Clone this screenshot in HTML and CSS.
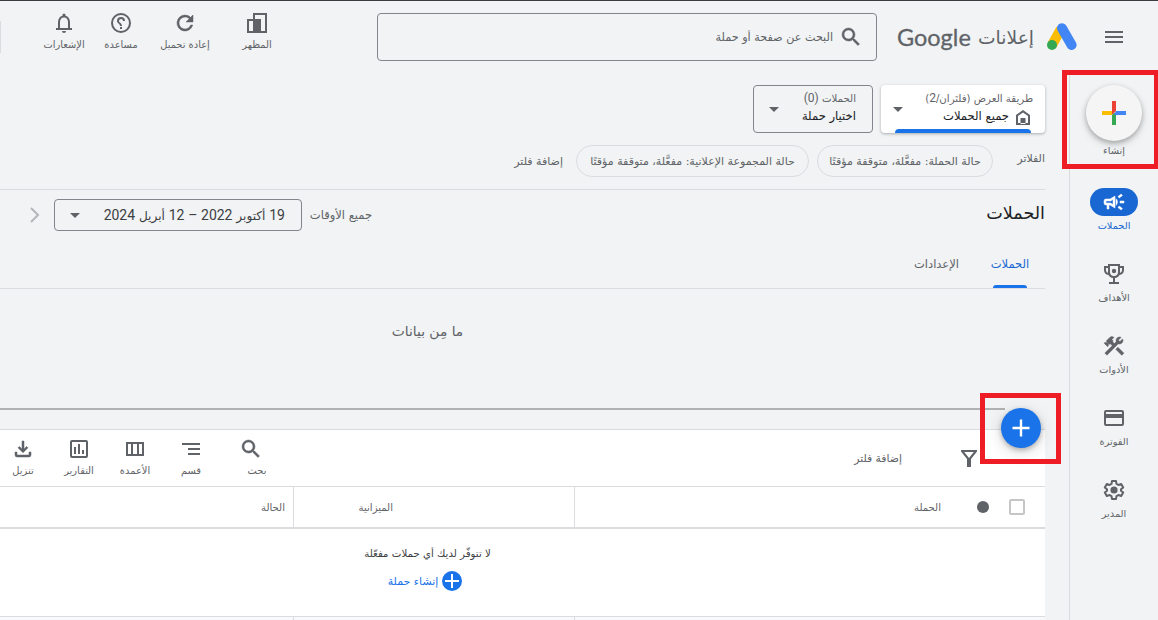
FILE: index.html
```html
<!DOCTYPE html>
<html lang="ar" dir="rtl">
  <head>
    <meta charset="UTF-8" />
    <meta name="viewport" content="width=device-width, initial-scale=1.0" />
    <title>إعلانات Google</title>
    <link rel="stylesheet" href="styles.css">
  </head>
  <body>
    <header class="header">
      <svg class="menu-icon" viewBox="0 0 20 14" width="20" height="14"><path d="M1 1h18v2H1zM1 6h18v2H1zM1 11h18v2H1z" /></svg>
      <svg class="logo" viewBox="0 0 30 28" width="30" height="28">
        <path d="M14 6 5 22" stroke="#fbbc04" stroke-width="10" />
        <path d="M15 5.2 24.6 22" stroke="#4285f4" stroke-width="10" stroke-linecap="round" />
        <circle cx="5" cy="22" r="5" fill="#34a853" />
      </svg>
      <div class="brand"><span class="brand-ads">إعلانات</span><span class="brand-google">Google</span></div>
      <div class="search">
        <svg class="bold" viewBox="0 0 24 24" width="24" height="24"><path d="M15.5 14h-.79l-.28-.27A6.47 6.47 0 0 0 16 9.500 6.500 6.500 0 1 0 9.500 16c1.610 0 3.090-.59 4.230-1.570l.27.28v.79l5 4.990L20.490 19l-4.990-5zm-6 0C7.010 14 5 11.990 5 9.500S7.010 5 9.500 5 14 7.010 14 9.500 11.990 14 9.500 14z" /></svg>
        <span class="search-text">البحث عن صفحة أو حملة</span>
      </div>
      <div class="actions">
        <div class="action">
          <svg viewBox="0 0 22 22" width="22" height="22"><path fill-rule="evenodd" d="M7 1h14v20H1V7h6zM9 3v4h6v12h4V3zM3 9v10h4V9z" /></svg>
          <span>المظهر</span>
        </div>
        <div class="action reload">
          <svg class="bold" viewBox="0 0 24 24" width="24" height="24"><path d="M17.650 6.350A7.960 7.960 0 0 0 12 4a8 8 0 1 0 7.730 10h-2.080A6 6 0 1 1 12 6c1.660 0 3.140.69 4.220 1.780L13 11h7V4z" /></svg>
          <span>إعادة تحميل</span>
        </div>
        <div class="action help">
          <svg viewBox="0 0 24 24" width="24" height="24">
            <g transform="matrix(-1 0 0 1 24 0)">
              <path d="M11 18h2v-2h-2v2zm1-16a10 10 0 1 0 0 20 10 10 0 0 0 0-20zm0 18a8 8 0 1 1 0-16 8 8 0 0 1 0 16zm0-14a4 4 0 0 0-4 4h2a2 2 0 1 1 4 0c0 2-3 1.750-3 5h2c0-2.250 3-2.500 3-5a4 4 0 0 0-4-4z" />
            </g>
          </svg>
          <span>مساعدة</span>
        </div>
        <div class="action bell">
          <svg viewBox="0 0 24 24" width="24" height="24"><path d="M12 22a2 2 0 0 0 2-2h-4a2 2 0 0 0 2 2zm6-5v-6c0-3.070-1.630-5.640-4.500-6.320V4a1.500 1.500 0 0 0-3 0v.68C7.640 5.360 6 7.920 6 11v6H4v2h16v-2zm-2 0H8v-6c0-2.480 1.510-4.500 4-4.500s4 2.020 4 4.500z" /></svg>
          <span>الإشعارات</span>
        </div>
      </div>
      <div class="header-divider"></div>
    </header>

    <div class="shell">
      <nav class="sidebar">
        <div class="create">
          <div class="create-button">
            <svg viewBox="0 0 24 24" width="24" height="24">
              <path fill="#ea4335" d="M10 0h4v10l-4 4z" />
              <path fill="#fbbc04" d="M0 10h10v4H0z" />
              <path fill="#34a853" d="M10 14l2-2h2v12h-4z" />
              <path fill="#4285f4" d="M14 10h10v4H12z" />
            </svg>
          </div>
          <span class="nav-label">إنشاء</span>
        </div>
        <div class="nav-item active">
          <div class="nav-icon">
            <svg class="bold" viewBox="0 0 24 24" width="24" height="24"><path fill-rule="evenodd" d="M18 11h4v2h-4zM16 17.610l3.200 2.400 1.200-1.600-3.200-2.400zM20.400 5.600 19.200 4 16 6.400 17.200 8zM4 9a2 2 0 0 0-2 2v2a2 2 0 0 0 2 2h1v4h2v-4h1l5 3V6L8 9zm5.030 1.710L11 9.530v4.940l-1.970-1.180-.48-.29H4v-2h4.550zM15.500 12a4.500 4.500 0 0 0-1.500-3.350v6.690A4.500 4.500 0 0 0 15.500 12z" /></svg>
          </div>
          <span class="nav-label">الحملات</span>
        </div>
        <div class="nav-item">
          <div class="nav-icon">
            <svg viewBox="0 0 24 24" width="24" height="24"><path fill-rule="evenodd" d="M6 2h12v2h4v4c0 3-1.800 4.800-4.500 5-.9 1.700-2.400 2.700-4.500 3v4h4v2H7v-2h4v-4c-2.100-.3-3.600-1.300-4.500-3C3.800 12.800 2 11 2 8V4h4zM8 4v6c0 2.400 1.600 4 4 4s4-1.600 4-4V4zM4 6v2c0 1.500.7 2.500 2 2.800V6zM18 6v4.800c1.300-.3 2-1.300 2-2.800V6z" /><circle cx="12" cy="9" r="2.200" /></svg>
          </div>
          <span class="nav-label">الأهداف</span>
        </div>
        <div class="nav-item">
          <div class="nav-icon">
            <svg class="bold" viewBox="0 0 24 24" width="24" height="24"><path d="m13.780 15.300 6 6 2.110-2.160-6-6zM17.500 10c1.930 0 3.500-1.570 3.500-3.500 0-.58-.16-1.120-.41-1.600l-2.700 2.700-1.490-1.490 2.700-2.700c-.48-.25-1.020-.41-1.600-.41C15.570 3 14 4.570 14 6.500c0 .41.080.8.210 1.160l-1.850 1.850-1.780-1.780.71-.71-1.410-1.410L12 3.490a3 3 0 0 0-4.240 0L4.220 7.030l1.410 1.410H2.810l-.71.71 3.540 3.540.71-.71V9.150l1.410 1.410.71-.71 1.780 1.780-7.410 7.410 2.120 2.120L16.340 9.790c.36.130.75.210 1.160.21z" /></svg>
          </div>
          <span class="nav-label">الأدوات</span>
        </div>
        <div class="nav-item">
          <div class="nav-icon">
            <svg viewBox="0 0 24 24" width="24" height="24"><path fill-rule="evenodd" d="M4 4h16a2 2 0 0 1 2 2v12a2 2 0 0 1-2 2H4a2 2 0 0 1-2-2V6a2 2 0 0 1 2-2zm0 2v2h16V6zm0 6v6h16v-6z" /></svg>
          </div>
          <span class="nav-label">الفوترة</span>
        </div>
        <div class="nav-item">
          <div class="nav-icon">
            <svg viewBox="0 0 24 24" width="24" height="24"><path d="m10 3-.5 2.900-1.900 1.100-2.800-1-2 3.500L5 11.300v1.400l-2.200 1.800 2 3.500 2.800-1 1.900 1.100L10 21h4l.5-2.900 1.900-1.100 2.800 1 2-3.500-2.200-1.800v-1.400l2.200-1.800-2-3.500-2.800 1-1.900-1.100L14 3z" fill="none" stroke="#5f6368" stroke-width="2" stroke-linejoin="round" /><circle cx="12" cy="12" r="3.600" /></svg>
          </div>
          <span class="nav-label">المدير</span>
        </div>
      </nav>

      <main class="main">
        <section class="scope">
          <div class="selects">
            <div class="select view">
              <div class="select-body">
                <div class="select-label">طريقة العرض (فلتَران/<span class="num">2</span>)</div>
                <div class="select-value">
                  <svg viewBox="0 0 14 15" width="14" height="15"><path fill-rule="evenodd" d="M7 0l7 5v10H0V5zm0 2.400L2 6v7h10V6zM4.500 8h5v6h-5z" /></svg>
                  <span>جميع الحملات</span>
                </div>
              </div>
              <div class="caret"></div>
              <div class="select-bar"></div>
            </div>
            <div class="select campaign">
              <div class="select-body">
                <div class="select-label">الحملات <span class="num">(0)</span></div>
                <div class="select-value">اختيار حملة</div>
              </div>
              <div class="caret"></div>
            </div>
          </div>
          <div class="filters">
            <span class="filters-title">الفلاتر</span>
            <span class="chip chip-campaign">حالة الحملة: مفعَّلة، متوقفة مؤقتًا</span>
            <span class="chip chip-group">حالة المجموعة الإعلانية: مفعَّلة، متوقفة مؤقتًا</span>
            <span class="add-filter">إضافة فلتر</span>
          </div>
        </section>

        <section class="title-row">
          <h1 class="page-title">الحملات</h1>
          <span class="range-label">جميع الأوقات</span>
          <div class="date-range">
            <span class="date-text"><span class="num">19</span> أكتوبر <span class="num">2022 –</span> <span class="num">12</span> أبريل <span class="num">2024</span></span>
            <div class="caret"></div>
          </div>
          <svg class="chevron" viewBox="0 0 10 16" width="10" height="16"><path d="M1 1l7 7-7 7" fill="none" stroke="#b4b7ba" stroke-width="2" /></svg>
        </section>

        <div class="tabs">
          <div class="tab selected">الحملات</div>
          <div class="tab settings">الإعدادات</div>
        </div>

        <div class="chart-empty">ما مِن بيانات</div>
        <div class="splitter"></div>

        <section class="table">
          <div class="toolbar">
            <svg class="funnel" viewBox="0 0 16 17" width="16" height="17"><path d="M0 0h16v1.500L10 9v8H6V9L0 1.500zM3.200 2 8 8l4.800-6z" fill-rule="evenodd" /></svg>
            <span class="toolbar-filter">إضافة فلتر</span>
            <div class="tools">
              <div class="tool search-tool">
                <svg class="bold" viewBox="0 0 24 24" width="24" height="24"><path d="M15.500 14h-.79l-.28-.27A6.470 6.470 0 0 0 16 9.500 6.500 6.500 0 1 0 9.500 16c1.610 0 3.090-.59 4.230-1.570l.27.28v.79l5 4.990L20.490 19l-4.990-5zm-6 0C7.010 14 5 11.990 5 9.500S7.010 5 9.500 5 14 7.010 14 9.500 11.990 14 9.500 14z" /></svg>
                <span>بحث</span>
              </div>
              <div class="tool segment-tool">
                <svg viewBox="0 0 24 24" width="24" height="24"><path d="M3 6h18v2H3zM9 11h12v2H9zM9 16h12v2H9z" /></svg>
                <span>قسم</span>
              </div>
              <div class="tool">
                <svg viewBox="0 0 24 24" width="24" height="24"><path fill-rule="evenodd" d="M3 5h18v14H3zM5 7v10h3V7zM10 7v10h4V7zM16 7v10h3V7z" /></svg>
                <span>الأعمدة</span>
              </div>
              <div class="tool">
                <svg viewBox="0 0 24 24" width="24" height="24"><path fill-rule="evenodd" d="M5 3h14a2 2 0 0 1 2 2v14a2 2 0 0 1-2 2H5a2 2 0 0 1-2-2V5a2 2 0 0 1 2-2zm0 2v14h14V5zM7 10h2v7H7zM11 7h2v10h-2zM15 13h2v4h-2z" /></svg>
                <span>التقارير</span>
              </div>
              <div class="tool">
                <svg class="bold" viewBox="0 0 24 24" width="24" height="24"><path d="M11 4h2v8l2.600-2.600L17 10.800l-5 5-5-5 1.400-1.400L11 12zM4 15h2v3h12v-3h2v3a2 2 0 0 1-2 2H6a2 2 0 0 1-2-2z" /></svg>
                <span>تنزيل</span>
              </div>
            </div>
          </div>
          <div class="row head">
            <div class="cell cell-campaign">
              <span class="checkbox"></span>
              <span class="status-dot"></span>
              <span>الحملة</span>
            </div>
            <div class="cell cell-budget">الميزانية</div>
            <div class="cell cell-status">الحالة</div>
          </div>
          <div class="table-empty">
            <div class="empty-text">لا تتوفّر لديك أي حملات مفعّلة</div>
            <div class="empty-link">
              <svg viewBox="0 0 20 20" width="20" height="20"><circle cx="10" cy="10" r="10" fill="#1a73e8" /><path d="M9 3h2v6h6v2h-6v6H9v-6H3V9h6z" fill="#fff" /></svg>
              <span>إنشاء حملة</span>
            </div>
          </div>
          <div class="row foot">
            <div class="cell cell-campaign"></div>
            <div class="cell cell-budget"></div>
            <div class="cell cell-status"></div>
          </div>
        </section>
      </main>
    </div>

    <div class="fab">
      <svg viewBox="0 0 18 18" width="18" height="18"><path d="M7.800 .5h2.400v7.300h7.300v2.400h-7.300v7.300H7.800v-7.300H.5V7.800h7.300z" fill="#fff" /></svg>
    </div>
    <div class="highlight highlight-create"></div>
    <div class="highlight highlight-fab"></div>
  </body>
</html>
```
FILE: styles.css
```css
* {
  box-sizing: border-box;
}

body {
  margin: 0;
  height: 620px;
  overflow: hidden;
  position: relative;
  border-top: 1px solid #3c3c40;
  background: #f1f3f4;
  color: #5f6368;
  font-family: "DejaVu Sans", sans-serif;
  font-size: 11px;
  white-space: nowrap;
}

svg {
  display: block;
  flex-shrink: 0;
  fill: #5f6368;
}

.bold {
  stroke: #5f6368;
  stroke-width: 0.5;
}

.num {
  font-family: Roboto, sans-serif;
  font-size: 12px;
}

.caret {
  border: 5px solid transparent;
  border-top-color: #5f6368;
  border-bottom: 0;
}

/* header */
.header {
  display: flex;
  align-items: center;
  height: 72px;
  padding-right: 34px;
}

.logo {
  margin-right: 27px;
  fill: none;
}

.brand {
  display: flex;
  align-items: center;
  justify-content: space-between;
  width: 137px;
  margin-right: 13px;
}

.brand-ads {
  font-size: 18.7px;
}

.brand-google {
  font-family: Lato, sans-serif;
  font-size: 23.5px;
  -webkit-text-stroke: 0.3px #5f6368;
}

.search {
  display: flex;
  align-items: center;
  gap: 6px;
  width: 500px;
  height: 48px;
  margin-right: 20px;
  padding-right: 13px;
  border: 1px solid #80868b;
  border-radius: 4px;
  font-size: 11.2px;
}

.actions {
  display: flex;
  margin-right: 90px;
}

.action {
  display: flex;
  flex-direction: column;
  align-items: center;
  justify-content: space-between;
  width: 60px;
  height: 40px;
  margin-bottom: 12px;
  font-size: 9.9px;
  line-height: 12px;
}

.action svg {
  height: 24px;
}

.reload {
  margin-right: 12px;
}

.help {
  margin-right: 4px;
}

.bell {
  margin-right: -3px;
}

.header-divider {
  width: 1px;
  height: 32px;
  margin-right: auto;
  background: #dadce0;
}

/* side navigation */
.shell {
  display: flex;
  height: 547px;
}

.sidebar {
  display: flex;
  flex-direction: column;
  align-items: center;
  width: 89px;
  flex-shrink: 0;
  padding-top: 12px;
  border-left: 1px solid #dadce0;
}

.nav-label {
  font-size: 9.8px;
  line-height: 14px;
}

.create {
  display: flex;
  flex-direction: column;
  align-items: center;
  gap: 3px;
  height: 103px;
}

.create-button {
  display: flex;
  align-items: center;
  justify-content: center;
  width: 56px;
  height: 56px;
  border-radius: 50%;
  background: #f5f5f5;
  box-shadow: 0 2px 5px rgba(0, 0, 0, 0.25), 0 4px 10px rgba(0, 0, 0, 0.12);
}

.nav-item {
  display: flex;
  flex-direction: column;
  align-items: center;
  gap: 3px;
  height: 72px;
}

.nav-icon {
  display: flex;
  align-items: center;
  justify-content: center;
  width: 48px;
  height: 28px;
  border-radius: 14px;
}

.active .nav-icon {
  background: #1967d2;
}

.active svg {
  fill: #fff;
  stroke: #fff;
}

.active .nav-label {
  color: #1967d2;
}

/* view, campaign and filters */
.main {
  width: 1045px;
  margin-right: 24px;
}

.scope {
  height: 117px;
  padding-top: 12px;
  border-bottom: 1px solid #dadce0;
}

.selects {
  display: flex;
  gap: 8px;
}

.select {
  display: flex;
  align-items: center;
  justify-content: space-between;
  height: 48px;
  border-radius: 4px;
}

.select-body {
  margin-bottom: 3px;
}

.view {
  position: relative;
  width: 164px;
  padding: 0 12px;
  background: #fff;
  box-shadow: 0 1px 3px rgba(60, 64, 67, 0.4);
}

.campaign {
  width: 120px;
  padding: 0 16px 0 15px;
  border: 1px solid #80868b;
}

.select-label {
  font-size: 10.2px;
  line-height: 17px;
}

.select-value {
  display: flex;
  align-items: center;
  gap: 7px;
  height: 18px;
  color: #202124;
  font-size: 11.6px;
}

.view .select-value {
  padding-right: 3px;
}

.select-value svg {
  margin-top: 2px;
}

.select-bar {
  position: absolute;
  right: 14px;
  bottom: 0;
  width: 136px;
  height: 4px;
  border-radius: 4px 4px 0 0;
  background: #1a73e8;
}

.filters {
  display: flex;
  align-items: center;
  height: 32px;
  margin-top: 12px;
}

.filters-title {
  width: 28px;
  margin-left: 24px;
  padding-bottom: 6px;
}

.chip {
  display: flex;
  align-items: center;
  justify-content: center;
  height: 32px;
  border: 1px solid #dadce0;
  border-radius: 16px;
}

.chip-campaign {
  width: 176px;
}

.chip-group {
  width: 233px;
  margin-right: 8px;
}

.add-filter {
  margin-right: 13px;
}

/* title and dates */
.title-row {
  display: flex;
  align-items: center;
  height: 50px;
}

.page-title {
  width: 59px;
  margin: 0 0 0 614px;
  padding-bottom: 4px;
  color: #202124;
  font-size: 17.6px;
  font-weight: normal;
}

.range-label {
  width: 62px;
  font-size: 11.5px;
}

.date-range {
  display: flex;
  align-items: center;
  justify-content: space-between;
  width: 248px;
  height: 32px;
  margin-right: 8px;
  padding: 0 16px 0 15px;
  border: 1px solid #80868b;
  border-radius: 4px;
  color: #3c4043;
  font-size: 12.1px;
}

.date-range .num {
  font-size: 14px;
}

.chevron {
  margin-right: 14px;
}

.tabs {
  display: flex;
  height: 49px;
  border-bottom: 1px solid #dadce0;
}

.tab {
  font-size: 11.5px;
  line-height: 48px;
}

.selected {
  display: flex;
  flex-direction: column;
  align-items: center;
  width: 70px;
  color: #1967d2;
}

.selected::after {
  content: "";
  width: 34px;
  height: 3px;
  margin-top: -3px;
  border-radius: 3px 3px 0 0;
  background: #1a73e8;
}

.settings {
  margin-right: 16px;
}

.chart-empty {
  height: 119px;
  padding: 32px 190px 0 0;
  text-align: center;
  font-size: 13.8px;
  line-height: 20px;
}

.splitter {
  width: 1005px;
  height: 2px;
  margin-right: 40px;
  background: #b0b1b3;
}

/* campaigns table */
.table {
  margin-top: 19px;
  border-top: 1px solid #dadce0;
  background: #fff;
}

.toolbar {
  display: flex;
  align-items: center;
  height: 57px;
  padding-right: 68px;
  border-bottom: 1px solid #dadce0;
}

.toolbar-filter {
  width: 48px;
  margin-right: 59px;
  font-size: 10.8px;
}

.tools {
  display: flex;
  margin: 0 auto 0 -5px;
}

.tool {
  display: flex;
  flex-direction: column;
  align-items: center;
  gap: 4px;
  width: 56px;
  margin-bottom: 2px;
  font-size: 9.9px;
  line-height: 12px;
}

.search-tool {
  margin-left: 4px;
}

.search-tool span {
  padding-left: 0;
  margin-left: -12px;
}

.row {
  display: flex;
  font-size: 10.1px;
}

.head {
  height: 42px;
  border-bottom: 2px solid #dadce0;
}

.cell {
  display: flex;
  align-items: center;
}

.cell-campaign {
  width: 471px;
  padding-right: 20px;
  border-left: 1px solid #dadce0;
}

.cell-budget {
  width: 281px;
  padding-right: 181px;
  border-left: 1px solid #dadce0;
}

.cell-status {
  padding-right: 8px;
}

.checkbox {
  width: 16px;
  height: 16px;
  border: 2px solid #c6c6c6;
  border-radius: 2px;
}

.status-dot {
  width: 12px;
  height: 12px;
  margin: 0 20px 0 36px;
  border-radius: 50%;
  background: #5f6368;
}

.search-tool span {
  margin-left: 0;
  padding-left: 12px;
}

.table-empty {
  display: flex;
  flex-direction: column;
  align-items: center;
  height: 88px;
  padding: 17px 190px 0 0;
  border-bottom: 1px solid #dadce0;
  color: #3c4043;
}

.empty-text {
  font-size: 10.2px;
  line-height: 16px;
}

.empty-link {
  display: flex;
  align-items: center;
  gap: 4px;
  margin: 9px 5px 0 0;
  color: #1a73e8;
}

.foot {
  height: 4px;
  background: #f8f9fa;
}

/* floating button and callouts */
.fab {
  position: absolute;
  left: 1001px;
  top: 407px;
  display: flex;
  align-items: center;
  justify-content: center;
  width: 40px;
  height: 40px;
  border-radius: 50%;
  background: #1a73e8;
  box-shadow: 0 2px 5px rgba(0, 0, 0, 0.25), 0 4px 16px rgba(0, 0, 0, 0.15);
}

.highlight {
  position: absolute;
  border: 5px solid #ee1c25;
}

.highlight-create {
  left: 1062px;
  top: 69px;
  width: 97px;
  height: 99px;
}

.highlight-fab {
  left: 980px;
  top: 392px;
  width: 81px;
  height: 71px;
}
```
